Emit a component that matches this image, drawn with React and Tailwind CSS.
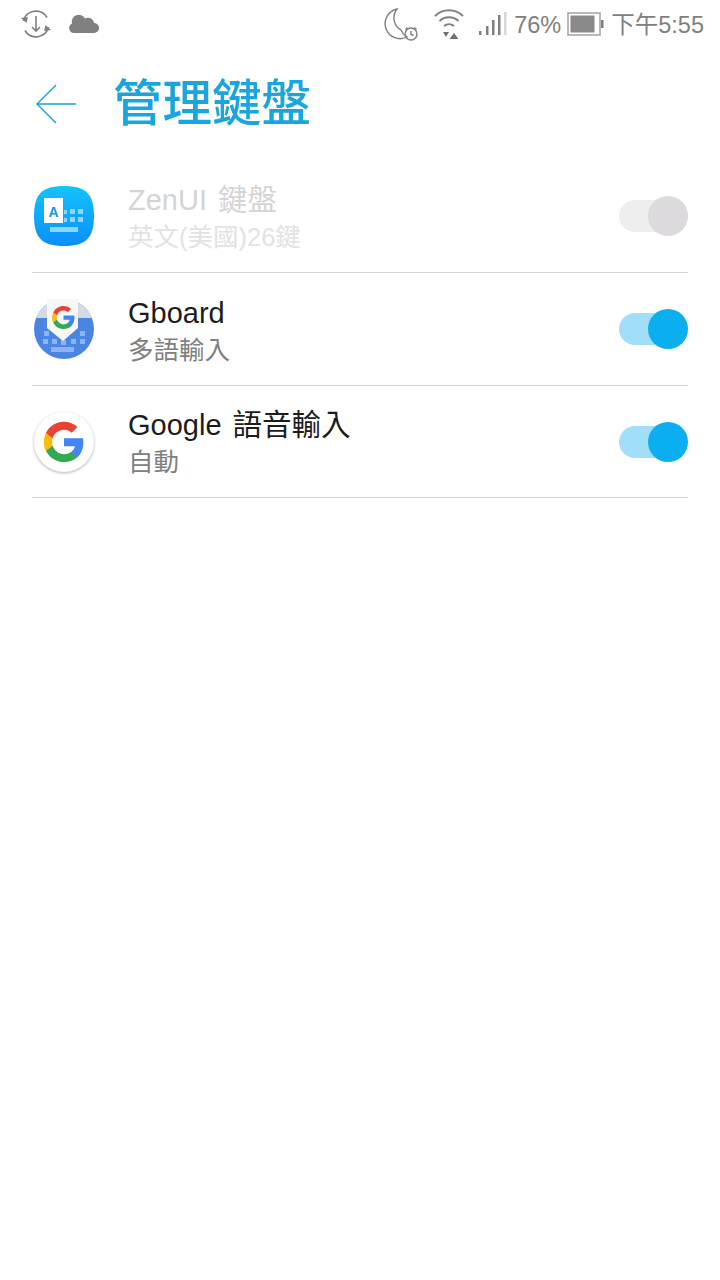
const FONT = "font-['Liberation_Sans','Noto_Sans_CJK_TC',sans-serif]";

const GoogleG = ({ className }) => (
  <svg viewBox="0 0 24 24" className={className}>
    <path fill="#4285F4" d="M22.56 12.25c0-.78-.07-1.53-.2-2.25H12v4.26h5.92c-.26 1.37-1.04 2.53-2.21 3.31v2.77h3.57c2.08-1.92 3.28-4.74 3.28-8.09z" />
    <path fill="#34A853" d="M12 23c2.97 0 5.46-.98 7.28-2.66l-3.57-2.77c-.98.66-2.23 1.06-3.71 1.06-2.86 0-5.29-1.93-6.16-4.53H2.18v2.84C3.99 20.53 7.7 23 12 23z" />
    <path fill="#FBBC05" d="M5.84 14.09c-.22-.66-.35-1.36-.35-2.09s.13-1.43.35-2.09V7.07H2.18C1.43 8.55 1 10.22 1 12s.43 3.45 1.18 4.93l2.85-2.22.81-.62z" />
    <path fill="#EA4335" d="M12 5.38c1.62 0 3.06.56 4.21 1.64l3.15-3.15C17.45 2.09 14.97 1 12 1 7.7 1 3.99 3.47 2.18 7.07l3.66 2.84c.87-2.6 3.3-4.53 6.16-4.53z" />
  </svg>
);

const ZenIcon = () => (
  <svg viewBox="0 0 60 60" className="w-[60px] h-[60px]">
    <defs>
      <linearGradient id="zen" x1="0" y1="0" x2="0" y2="1">
        <stop offset="0" stopColor="#14c3fb" />
        <stop offset="1" stopColor="#0a8ffb" />
      </linearGradient>
    </defs>
    <path d="M30 0C52 0 60 8 60 30C60 52 52 60 30 60C8 60 0 52 0 30C0 8 8 0 30 0Z" fill="url(#zen)" />
    <path d="M10 12H29V37H10Z" fill="#fff" />
    <text x="14.500" y="31" fontSize="14" fontWeight="700" fill="#1296ee" fontFamily="Liberation Sans">A</text>
    <g fill="#8fd4fb">
      <rect x="30" y="24" width="3" height="4" />
      <rect x="36" y="23" width="5" height="5" />
      <rect x="44" y="23" width="5" height="5" />
      <rect x="30" y="32" width="3" height="4" />
      <rect x="36" y="31" width="5" height="5" />
      <rect x="44" y="31" width="5" height="5" />
      <rect x="16" y="41" width="28" height="5" />
    </g>
  </svg>
);

const GboardIcon = () => (
  <div className="relative w-[60px] h-[60px]">
    <svg viewBox="0 0 60 60" className="w-[60px] h-[60px]">
      <defs>
        <clipPath id="gb"><circle cx="30" cy="30" r="30" /></clipPath>
      </defs>
      <g clipPath="url(#gb)">
        <rect width="60" height="60" fill="#4a85e3" />
        <rect width="60" height="19" fill="#d3dae6" />
      </g>
      <g fill="#8fb3f0">
        <rect x="10" y="32" width="5" height="5" />
        <rect x="46" y="32" width="5" height="5" />
        <rect x="9" y="40" width="5" height="5" />
        <rect x="18" y="40" width="5" height="5" />
        <rect x="27" y="41" width="5" height="5" />
        <rect x="37" y="40" width="5" height="5" />
        <rect x="46" y="40" width="5" height="5" />
        <rect x="17" y="48" width="23" height="5" />
      </g>
      <path d="M13 0H44V29L29 42L13 29Z" fill="#f7f7f7" />
    </svg>
    <GoogleG className="absolute left-[17px] top-[6px] w-[25px] h-[25px]" />
  </div>
);

const GoogleIcon = () => (
  <div className="w-[60px] h-[60px] rounded-full bg-white shadow-[0_1px_3px_rgba(0,0,0,0.3)] flex items-center justify-center">
    <GoogleG className="w-[44px] h-[44px]" />
  </div>
);

const Toggle = ({ on }) => (
  <div className="relative w-[69px] h-10 flex items-center shrink-0">
    <div className={`w-[52px] h-8 rounded-full ${on ? 'bg-[#a1dff8]' : 'bg-[#eeeeee]'}`}></div>
    <div className={`absolute right-0 top-0 w-10 h-10 rounded-full ${on ? 'bg-[#0bafef]' : 'bg-[#dcdadc]'}`}></div>
  </div>
);

const rows = [
  { icon: <ZenIcon />, latin: 'ZenUI', cjk: '鍵盤', sub: '英文(美國)26鍵', disabled: true, height: 'h-[113px]' },
  { icon: <GboardIcon />, latin: 'Gboard', cjk: '', sub: '多語輸入', height: 'h-[113px]' },
  { icon: <GoogleIcon />, latin: 'Google', cjk: '語音輸入', sub: '自動', height: 'h-[112px]' },
];

const StatusLeft = () => (
  <div className="flex items-center gap-[18px]">
    <svg viewBox="0 0 30 30" className="w-[30px] h-[30px]" fill="none" stroke="#808080" strokeWidth="1.600">
      <path d="M2.500 12A12.800 12.800 0 0 1 26 8.500" />
      <path d="M27.500 18A12.800 12.800 0 0 1 4 21.500" />
      <path d="M15 7V22M11 18L15 22L19 18" />
      <path d="M0 9L5.500 14L7 8Z M30 21L24.500 16L23 22Z" fill="#808080" stroke="none" />
    </svg>
    <svg viewBox="0 0 30 20" className="w-[30px] h-5" fill="#808080">
      <path d="M5 19A5 5 0 0 1 3 9.500A7 7 0 0 1 16 4.500A6 6 0 0 1 25 9A5 5 0 0 1 25 19Z" />
    </svg>
  </div>
);

const StatusRight = () => (
  <div className="flex items-center">
    <svg viewBox="0 0 36 36" className="w-9 h-9" fill="none" stroke="#808080" strokeWidth="1.400">
      <path d="M13 3A15 15 0 1 0 23 31A14 14 0 0 1 17 24A14 14 0 0 1 13 3Z" />
      <circle cx="27" cy="28" r="6" />
      <path d="M27 25V28.500L29.500 29.500M21.500 23.500L23.500 21.500M32.500 23.500L30.500 21.500" />
    </svg>
    <svg viewBox="0 0 30 32" className="w-[30px] h-8 ml-[14px]" fill="none" stroke="#808080" strokeWidth="2">
      <path d="M1 8A20 20 0 0 1 29 8" />
      <path d="M5.500 13A14 14 0 0 1 24.500 13" />
      <path d="M10 18A8 8 0 0 1 20 18" />
      <path d="M9 24H15L12 29ZM15.500 31L20 25L24.500 31Z" fill="#707070" stroke="none" />
    </svg>
    <svg viewBox="0 0 30 26" className="w-[30px] h-[26px] ml-[14px]" fill="#808080">
      <rect x="1" y="20" width="2.500" height="4" />
      <rect x="8" y="15" width="2.500" height="9" />
      <rect x="14" y="9" width="2.500" height="15" />
      <rect x="20" y="4" width="2.500" height="20" />
      <rect x="26" y="1" width="2.500" height="23" fill="#d8d8d8" />
    </svg>
    <span className="ml-[6px] mt-[3px] text-[23.500px] leading-none text-[#808080]">76%</span>
    <svg viewBox="0 0 37 24" className="w-[37px] h-6 ml-[6px]" fill="none">
      <rect x="1" y="1" width="32" height="22" stroke="#a8a8a8" strokeWidth="1.600" />
      <rect x="3.500" y="3.500" width="24" height="17" fill="#8a8a8a" />
      <rect x="34" y="8" width="2.500" height="8" fill="#808080" />
    </svg>
    <span className="ml-[7px] mt-[3px] text-[23.500px] leading-none text-[#808080]">下午5:55</span>
  </div>
);

const App = () => {
  return (
    <div className={`w-[720px] h-[1280px] bg-white overflow-hidden ${FONT}`}>
      <div className="h-12 pl-[21px] pr-4 flex items-center justify-between">
        <StatusLeft />
        <StatusRight />
      </div>

      <div className="h-[112px] pl-9 flex items-center">
        <svg viewBox="0 0 40 40" className="w-10 h-10" fill="none" stroke="#1ba3d8" strokeWidth="1.400">
          <path d="M40 20H1M20 1L1 20L20 39" />
        </svg>
        <h1 className="ml-[37px] text-[49.500px] leading-none font-medium text-[#1aa5dc]">管理鍵盤</h1>
      </div>

      <div className="mx-8">
        {rows.map((row) => (
          <div key={row.latin} className={`${row.height} border-b border-[#d5d5d5] flex items-center`}>
            <div className="ml-0.5 shrink-0">{row.icon}</div>
            <div className="ml-[34px] pt-1 flex-1 flex flex-col">
              <span className={`text-[29px] leading-[37px] [word-spacing:3px] ${row.disabled ? 'text-[#d4d4d4]' : 'text-[#1c1c1c]'}`}>
                {row.latin} <span className="text-[29.500px]">{row.cjk}</span>
              </span>
              <span className={`text-[25.500px] leading-[37px] ${row.disabled ? 'text-[#e2e2e2]' : 'text-[#808080]'}`}>{row.sub}</span>
            </div>
            <Toggle on={!row.disabled} />
          </div>
        ))}
      </div>
    </div>
  );
};

export default App;
